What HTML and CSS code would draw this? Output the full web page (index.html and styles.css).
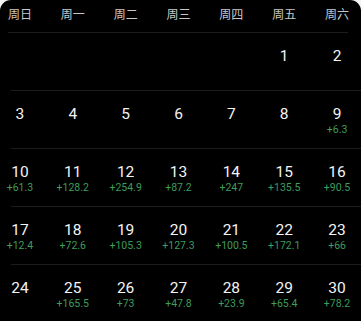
FILE: index.html
```html
<!DOCTYPE html>
<html lang="zh">
<head>
<meta charset="utf-8">
<link rel="stylesheet" href="styles.css">
</head>
<body>
<div class="cal">
  <div class="grid weekdays">
    <span>周日</span><span>周一</span><span>周二</span><span>周三</span><span>周四</span><span>周五</span><span>周六</span>
  </div>
  <div class="rule rule-head"></div>
  <div class="grid week">
    <div class="day"></div><div class="day"></div><div class="day"></div><div class="day"></div><div class="day"></div>
    <div class="day"><span class="num">1</span></div>
    <div class="day"><span class="num">2</span></div>
  </div>
  <div class="rule"></div>
  <div class="grid week">
    <div class="day"><span class="num">3</span></div>
    <div class="day"><span class="num">4</span></div>
    <div class="day"><span class="num">5</span></div>
    <div class="day"><span class="num">6</span></div>
    <div class="day"><span class="num">7</span></div>
    <div class="day"><span class="num">8</span></div>
    <div class="day"><span class="num">9</span><span class="gain">+6.3</span></div>
  </div>
  <div class="rule"></div>
  <div class="grid week">
    <div class="day"><span class="num">10</span><span class="gain">+61.3</span></div>
    <div class="day"><span class="num">11</span><span class="gain">+128.2</span></div>
    <div class="day"><span class="num">12</span><span class="gain">+254.9</span></div>
    <div class="day"><span class="num">13</span><span class="gain">+87.2</span></div>
    <div class="day"><span class="num">14</span><span class="gain">+247</span></div>
    <div class="day"><span class="num">15</span><span class="gain">+135.5</span></div>
    <div class="day"><span class="num">16</span><span class="gain">+90.5</span></div>
  </div>
  <div class="rule"></div>
  <div class="grid week">
    <div class="day"><span class="num">17</span><span class="gain">+12.4</span></div>
    <div class="day"><span class="num">18</span><span class="gain">+72.6</span></div>
    <div class="day"><span class="num">19</span><span class="gain">+105.3</span></div>
    <div class="day"><span class="num">20</span><span class="gain">+127.3</span></div>
    <div class="day"><span class="num">21</span><span class="gain">+100.5</span></div>
    <div class="day"><span class="num">22</span><span class="gain">+172.1</span></div>
    <div class="day"><span class="num">23</span><span class="gain">+66</span></div>
  </div>
  <div class="rule"></div>
  <div class="grid week">
    <div class="day"><span class="num">24</span></div>
    <div class="day"><span class="num">25</span><span class="gain">+165.5</span></div>
    <div class="day"><span class="num">26</span><span class="gain">+73</span></div>
    <div class="day"><span class="num">27</span><span class="gain">+47.8</span></div>
    <div class="day"><span class="num">28</span><span class="gain">+23.9</span></div>
    <div class="day"><span class="num">29</span><span class="gain">+65.4</span></div>
    <div class="day"><span class="num">30</span><span class="gain">+78.2</span></div>
  </div>
</div>
</body>
</html>
```
FILE: styles.css
```css
html, body {
  margin: 0;
  padding: 0;
  background: #f4f4f4;
}
body {
  width: 361px;
  height: 321px;
  overflow: hidden;
}
.cal {
  width: 361px;
  height: 321px;
  background: #000;
  border-radius: 11px 11px 0 0;
  overflow: hidden;
  display: flex;
  flex-direction: column;
  font-family: Roboto, "Noto Sans CJK SC", sans-serif;
}
.grid {
  display: grid;
  grid-template-columns: repeat(7, 1fr);
  width: 370px;
  margin-left: -6.5px;
  flex: none;
}
.weekdays {
  height: 32px;
  align-items: center;
  font-family: "Noto Sans CJK SC", sans-serif;
  font-size: 12px;
  color: #c8c8c8;
  text-align: center;
  line-height: 14px;
  padding-bottom: 4px;
  box-sizing: border-box;
}
.rule {
  height: 1px;
  background: #1c1c1c;
  margin-left: 11px;
  flex: none;
}
.rule-head {
  margin-left: 8px;
  margin-right: 13px;
}
.week {
  height: 57px;
}
.day {
  display: flex;
  flex-direction: column;
  align-items: center;
  padding-top: 14px;
}
.num {
  font-size: 15.5px;
  line-height: 18px;
  color: #f4f4f4;
}
.gain {
  font-size: 10.5px;
  line-height: 14px;
  color: #3e9c5d;
}
```
